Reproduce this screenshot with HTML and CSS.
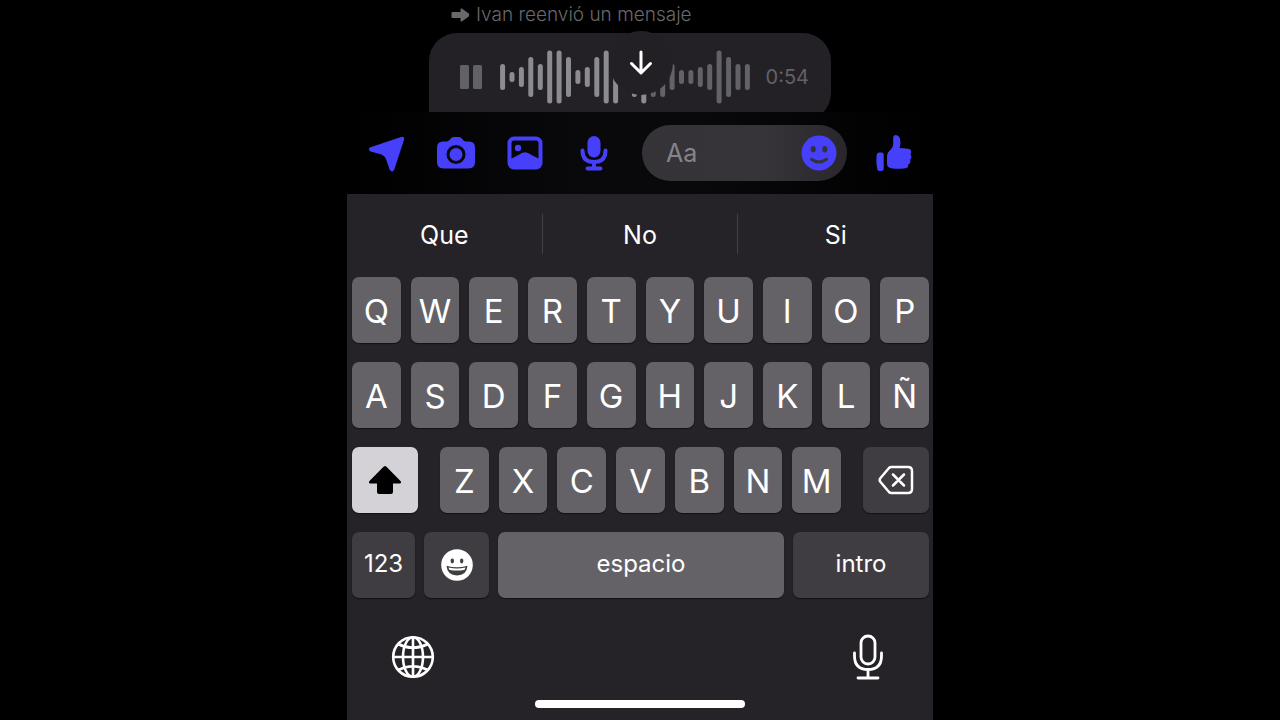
FILE: index.html
```html
<!DOCTYPE html>
<html lang="es">
<head>
  <meta charset="UTF-8">
  <meta name="viewport" content="width=device-width, initial-scale=1">
  <title>Chat</title>
  <link rel="stylesheet" href="styles.css">
</head>
<body>
  <div class="phone">
    <main class="chat">
      <p class="forwarded">
        <svg width="19" height="14" viewBox="0 0 19 14" aria-hidden="true"><path d="M1.500 4h8V1.500q0-1.500 1.300-.9l7 5q1 1.400 0 2.800l-7 5q-1.300.6-1.300-.9V10h-8Q.5 10 .5 9V5q0-1 1-1z" fill="currentColor"/></svg>
        Ivan reenvió un mensaje
      </p>
      <div class="bubble">
        <button class="pause" aria-label="Pausa">
          <svg width="22" height="24" viewBox="0 0 22 24"><rect width="9" height="24" rx="1.500" fill="currentColor"/><rect x="13" width="9" height="24" rx="1.500" fill="currentColor"/></svg>
        </button>
        <svg class="wave" width="250" height="54" viewBox="0 0 250 54" aria-hidden="true">
          <path class="wave-played" d="M2.600 16.500v21M12 24.500v5M21.400 19.500v15M30.800 9.500v35M40.300 16.500v21M49.700 3v48M59.100 3v48M68.500 9.500v35M77.900 22.500v9M87.300 19.500v15M96.800 9.500v35M106.200 3v48M115.600 3v48M125 16.500v21M134.400 9.500v35M143.800 3v48"/>
          <path class="wave-rest" d="M153.200 9.500v35M162.700 9.500v35M172.100 16.500v21M181.500 22.500v9M190.900 22.500v9M200.300 19.500v15M209.700 16.500v21M219.100 3v48M228.600 9.500v35M238 16.500v21M247.400 16.500v21"/>
        </svg>
        <span class="time">0:54</span>
      </div>
      <button class="scroll-down" aria-label="Ir al final">
        <svg width="24" height="28" viewBox="0 0 24 28" fill="none" stroke="currentColor" stroke-width="3" stroke-linecap="round" stroke-linejoin="round"><path d="M12 3v21M2.500 14.500 12 24l9.500-9.500"/></svg>
      </button>
    </main>

    <form class="composer">
      <button type="button" class="tool" aria-label="Ubicación">
        <svg width="38" height="38" viewBox="0 0 38 38"><path d="M2.500 13.300 33 3q3.800-1 3.100 2.600L26.300 35.500q-1.800 3.800-4.600.3L18.300 26q-1.300-4-4.800-5.500L2.500 17.500q-3.500-2.200 0-4.200z" fill="currentColor"/></svg>
      </button>
      <button type="button" class="tool" aria-label="Cámara">
        <svg width="38" height="38" viewBox="0 0 38 38"><path d="M12 6.500 14 4.300Q15.200 3 17 3h4.500q1.800 0 3 1.300l2 2.200q1 1 2.500 1h3q6 0 6 6V28q0 6.500-6.500 6.500h-25Q0 34.500 0 28V13.500q0-6 6-6h3.500q1.500 0 2.500-1z" fill="currentColor"/><circle cx="19" cy="20.500" r="8" fill="none" stroke="#08070a" stroke-width="3"/></svg>
      </button>
      <button type="button" class="tool" aria-label="Galería">
        <svg width="38" height="38" viewBox="0 0 38 38"><rect x="3.500" y="4.500" width="31" height="29" rx="4.500" fill="none" stroke="currentColor" stroke-width="4"/><circle cx="12" cy="14" r="3.200" fill="currentColor"/><path d="M3.500 25.500 12.500 21Q16 18.300 19 18.300T25.500 21l9 4.500V30q0 4-4 4h-23q-4 0-4-4z" fill="currentColor"/></svg>
      </button>
      <button type="button" class="tool" aria-label="Mensaje de voz">
        <svg width="38" height="38" viewBox="0 0 38 38"><rect x="12.500" y="2" width="13" height="21.500" rx="6.500" fill="currentColor"/><path d="M7.500 16.500q0 11.500 11.500 11.500t11.500-11.500M19 28v6M12.500 34.500h13" fill="none" stroke="currentColor" stroke-width="4" stroke-linecap="round"/></svg>
      </button>
      <div class="field">
        <input type="text" placeholder="Aa" aria-label="Mensaje">
        <button type="button" class="sticker" aria-label="Stickers">
          <svg width="36" height="36" viewBox="0 0 36 36"><circle cx="18" cy="18" r="17.500" fill="currentColor"/><ellipse cx="12.200" cy="14.200" rx="2.500" ry="3.300" fill="#343236"/><ellipse cx="23.800" cy="14.200" rx="2.500" ry="3.300" fill="#343236"/><path d="M10.500 24.300q7.500 5.500 15 0" fill="none" stroke="#343236" stroke-width="3" stroke-linecap="round"/></svg>
        </button>
      </div>
      <button type="button" class="tool" aria-label="Me gusta">
        <svg width="38" height="38" viewBox="0 0 38 38" fill="currentColor"><path d="M4 18.500h2.500q2.200 0 2.200 2V35q0 2-2.200 2H4.500q-2 0-2.300-2-1.200-6.500-.7-13 .3-3.500 2.500-3.500z"/><path d="M12 22q0-3 2.200-5 4-3.300 4-7.500V4q0-3 2.800-3 4.500.5 4.500 7.500 0 3.200-1 5.500 4 .2 8 .7 4 .3 3.700 3.300 0 1.300-.8 2.200 1.300 1.200 1 3-.2 1.700-1.500 2.400.9 1.200.5 2.700-.5 1.500-2 2 .3 4.200-4.700 4.200-5.500.6-11.200 0-5.500-.5-5.500-5z"/></svg>
      </button>
    </form>

    <section class="keyboard">
      <div class="suggestions">
        <button>Que</button>
        <button>No</button>
        <button>Si</button>
      </div>

      <div class="keys">
        <div class="row">
          <button class="key">Q</button>
          <button class="key">W</button>
          <button class="key">E</button>
          <button class="key">R</button>
          <button class="key">T</button>
          <button class="key">Y</button>
          <button class="key">U</button>
          <button class="key">I</button>
          <button class="key">O</button>
          <button class="key">P</button>
        </div>
        <div class="row">
          <button class="key">A</button>
          <button class="key">S</button>
          <button class="key">D</button>
          <button class="key">F</button>
          <button class="key">G</button>
          <button class="key">H</button>
          <button class="key">J</button>
          <button class="key">K</button>
          <button class="key">L</button>
          <button class="key">Ñ</button>
        </div>
        <div class="row row-shift">
          <button class="key key-side key-active" aria-label="Mayúsculas">
            <svg width="34" height="30" viewBox="0 0 34 30"><path d="M15.800 1.500q1.200-1 2.400 0L32.500 16q1.500 2.500-1 2.500H25V27q0 2-2 2H11q-2 0-2-2v-8.500H2.500q-2.500 0-1-2.500z" fill="currentColor"/></svg>
          </button>
          <div class="row letters">
            <button class="key">Z</button>
            <button class="key">X</button>
            <button class="key">C</button>
            <button class="key">V</button>
            <button class="key">B</button>
            <button class="key">N</button>
            <button class="key">M</button>
          </div>
          <button class="key key-side key-dark" aria-label="Borrar">
            <svg width="36" height="30" viewBox="0 0 36 30" fill="none" stroke="currentColor" stroke-width="2.500" stroke-linecap="round" stroke-linejoin="round"><path d="M13.500 2H30q4 0 4 4v18q0 4-4 4H13.500q-1.500 0-2.500-1L2.500 17q-1.700-2 0-4L11 3q1-1 2.500-1zM15 9.500l11 11M26 9.500l-11 11"/></svg>
          </button>
        </div>
        <div class="row row-bottom">
          <button class="key key-numbers key-dark key-word">123</button>
          <button class="key key-emoji key-dark" aria-label="Emoji">
            <svg width="32" height="32" viewBox="0 0 32 32"><circle cx="16" cy="16" r="15.800" fill="currentColor"/><ellipse cx="11.300" cy="12" rx="1.700" ry="2.400" fill="#3f3e41"/><ellipse cx="20.700" cy="12" rx="1.700" ry="2.400" fill="#3f3e41"/><path d="M5.500 16.800q10.500 3 21 0-.8 9.700-10.500 9.700T5.500 16.800z" fill="#3f3e41"/><path d="M7.500 18.500q8.500 2 17 0l-.8 2.200q-7.700 1.800-15.400 0z" fill="currentColor"/></svg>
          </button>
          <button class="key key-space key-word">espacio</button>
          <button class="key key-enter key-dark key-word">intro</button>
        </div>
      </div>

      <div class="dock">
        <button aria-label="Cambiar teclado">
          <svg width="44" height="44" viewBox="0 0 44 44" fill="none" stroke="currentColor" stroke-width="2.600"><circle cx="22" cy="22" r="19.800"/><ellipse cx="22" cy="22" rx="10" ry="19.800"/><path d="M22 2v40M2 22h40M7 9q15 7.500 30 0M7 35q15-7.500 30 0"/></svg>
        </button>
        <button aria-label="Dictado">
          <svg width="44" height="46" viewBox="0 0 44 46" fill="none" stroke="currentColor" stroke-width="2.800" stroke-linecap="round"><rect x="15" y="2" width="14" height="28" rx="7"/><path d="M8.500 19v3q0 13.500 13.500 13.500t13.500-13.500v-3M22 36v8M12 44h20"/></svg>
        </button>
      </div>
      <div class="home-bar"></div>
    </section>
  </div>
</body>
</html>
```

FILE: styles.css
```css
* {
  box-sizing: border-box;
}

body {
  margin: 0;
  background: #000;
  color: #fff;
  font-family: Inter, "Liberation Sans", sans-serif;
}

button {
  display: flex;
  align-items: center;
  justify-content: center;
  margin: 0;
  padding: 0;
  border: 0;
  background: none;
  color: inherit;
  font: inherit;
  cursor: pointer;
}

svg {
  display: block;
  flex: none;
}

.phone {
  display: flex;
  flex-direction: column;
  width: 100%;
  max-width: 586px;
  min-height: 100vh;
  margin: 0 auto;
}

/* messages */
.chat {
  position: relative;
  height: 112px;
  padding: 3px 102px 0 82px;
  overflow: hidden;
}

.forwarded {
  display: flex;
  align-items: center;
  gap: 6px;
  margin: 0 0 6px;
  padding-left: 22px;
  color: #69686c;
  font-size: 19px;
  font-weight: 300;
  line-height: 24px;
  white-space: nowrap;
}

.bubble {
  display: flex;
  align-items: center;
  height: 88px;
  padding: 0 22px 0 31px;
  border-radius: 28px 28px 28px 4px;
  background: #232125;
}

.pause {
  margin-right: 18px;
  color: #626165;
}

.wave {
  fill: none;
  stroke-width: 5;
  stroke-linecap: round;
}

.wave-played {
  stroke: #8c8b8f;
}

.wave-rest {
  stroke: #636266;
}

.time {
  margin-left: auto;
  color: #626165;
  font-size: 20px;
}

.scroll-down {
  position: absolute;
  top: 31px;
  left: 50%;
  width: 64px;
  height: 64px;
  margin-left: -31px;
  border-radius: 50%;
  background: #222024;
}

/* composer */
.composer {
  display: flex;
  align-items: center;
  gap: 31px;
  height: 82px;
  padding: 0 20px 0 21px;
  background: linear-gradient(90deg, #000, #09080b 40%, #09080b 60%, #000);
}

.tool,
.sticker {
  color: #4740fa;
}

.field {
  display: flex;
  flex: 1;
  align-items: center;
  min-width: 0;
  height: 56px;
  margin: 0 -3px 0 -2px;
  padding: 0 10px 0 24px;
  border-radius: 28px;
  background: linear-gradient(90deg, #353337, #363438 60%, #29272b);
}

.field input {
  flex: 1;
  min-width: 0;
  padding: 0;
  border: 0;
  outline: none;
  background: none;
  color: #fff;
  font: inherit;
  font-size: 25px;
}

.field input::placeholder {
  color: #858488;
  opacity: 1;
}

/* keyboard */
.keyboard {
  display: flex;
  flex: 1;
  flex-direction: column;
  background: #252327;
}

.suggestions {
  display: flex;
  padding: 20px 0 23px;
}

.suggestions button {
  flex: 1;
  height: 40px;
  padding-top: 2px;
  font-size: 25px;
}

.suggestions button + button {
  border-left: 1px solid #424044;
}

.keys {
  display: flex;
  flex-direction: column;
  gap: 19px;
  padding: 0 4px 0 5px;
}

.row {
  display: flex;
  gap: 10px;
}

.row-shift {
  gap: 22px;
}

.letters {
  flex: 1;
}

.row-bottom {
  gap: 9px;
}

.key {
  flex: 1 1 0;
  min-width: 0;
  height: 66px;
  padding-top: 2px;
  border-radius: 7px;
  background: #646266;
  box-shadow: 0 1px 1px #121114;
  font-size: 33px;
}

.key-side {
  flex: 0 0 66px;
  padding: 0;
}

.key-numbers {
  flex: 0 0 63px;
}

.key-emoji {
  flex: 0 0 65px;
  padding: 0;
}

.key-enter {
  flex: 0 0 136px;
}

.key-dark {
  background: #3f3d41;
}

.key-active {
  background: #d4d2d6;
  color: #000;
}

.key-word {
  padding: 0 0 4px;
  font-size: 24px;
}

.dock {
  display: flex;
  justify-content: space-between;
  padding: 36px 43px 0 44px;
}

.home-bar {
  width: 210px;
  height: 8px;
  margin: auto auto 12px;
  border-radius: 4px;
  background: #fff;
}
```
